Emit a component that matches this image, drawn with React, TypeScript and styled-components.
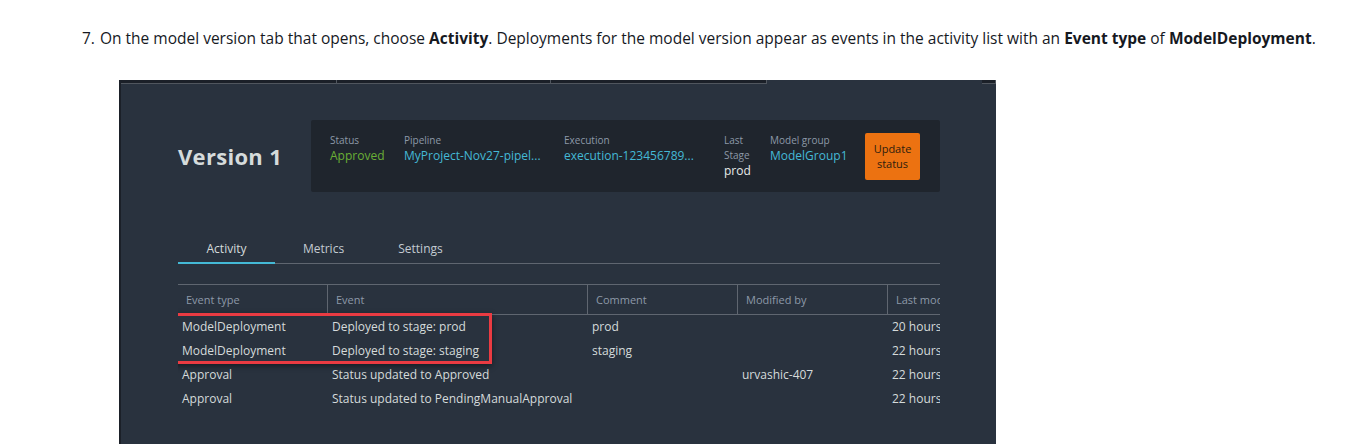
import { createGlobalStyle } from "styled-components";
import styled from "styled-components";

const GlobalStyle = createGlobalStyle`
    html, body {
        margin: 0;
        padding: 0;
        background: #ffffff;
        overflow: hidden;
    }
    body {
        font-family: "Open Sans", "Liberation Sans", sans-serif;
        color: #16191f;
    }
`;

const Page = styled.div`
    padding: 27px 0 0 82px;
    height: 444px;
    box-sizing: border-box;
`;

const Step = styled.div`
    display: flex;
    font-size: 15.5px;
    line-height: 22px;
    white-space: nowrap;

    b {
        font-weight: 700;
    }
`;

const StepNumber = styled.span`
    width: 18px;
    flex: none;
`;

const Shot = styled.div`
    margin: 31px 0 0 37px;
    width: 877px;
    height: 400px;
    background: #29323e;
    border-left: 2px solid #1b2028;
    box-sizing: border-box;
`;

const WindowTabs = styled.div`
    display: flex;
    height: 4px;
`;

interface WindowTabProps {
    $width: number;
    $active?: boolean;
}

const WindowTab = styled.div<WindowTabProps>`
    width: ${(p) => p.$width}px;
    flex: none;
    box-sizing: border-box;
    background: ${(p) => (p.$active ? "transparent" : "#1b2028")};
    border-bottom: ${(p) => (p.$active ? "none" : "1px solid #50565e")};
    border-right: ${(p) => (p.$active ? "none" : "1px solid #50565e")};
`;

const Content = styled.div`
    padding: 36px 56px 0 57px;
`;

const HeaderRow = styled.div`
    display: flex;
    align-items: center;
`;

const Title = styled.h1`
    margin: 0;
    width: 133px;
    font-size: 22px;
    font-weight: 700;
    color: #d5dbdb;
    letter-spacing: 0.3px;
`;

const InfoBox = styled.div`
    display: flex;
    align-items: center;
    width: 629px;
    height: 72px;
    box-sizing: border-box;
    padding: 0 20px 0 19px;
    background: #1f252d;
    border-radius: 2px;
`;

interface FieldProps {
    $width: number;
}

const Field = styled.div<FieldProps>`
    width: ${(p) => p.$width}px;
    flex: none;
    align-self: flex-start;
    padding-top: 13px;
    display: flex;
    flex-direction: column;
`;

const Label = styled.span`
    font-size: 10px;
    line-height: 15px;
    color: #8d99a8;
`;

type Tone = "green" | "blue" | "white";

const toneColor: Record<Tone, string> = {
    green: "#6aaf35",
    blue: "#44b9d6",
    white: "#e6eaea",
};

const Value = styled.span<{ $tone: Tone }>`
    font-size: 12px;
    line-height: 16px;
    color: ${(p) => toneColor[p.$tone]};
    white-space: nowrap;
`;

const UpdateButton = styled.button`
    margin-left: auto;
    width: 55px;
    height: 47px;
    padding: 0;
    border: none;
    border-radius: 2px;
    background: #ec7211;
    color: #2e1d0e;
    font-family: inherit;
    font-size: 11px;
    line-height: 15px;
`;

const Tabs = styled.div`
    display: flex;
    margin-top: 41px;
    border-bottom: 1px solid #5f6670;
`;

const Tab = styled.div<{ $active?: boolean }>`
    width: 97px;
    height: 31px;
    box-sizing: border-box;
    text-align: center;
    font-size: 12px;
    line-height: 31px;
    color: ${(p) => (p.$active ? "#d5dbdb" : "#c4cbd2")};
    border-bottom: 2px solid ${(p) => (p.$active ? "#44b9d6" : "transparent")};
    margin-bottom: -1px;
`;

const TableWrap = styled.div`
    position: relative;
    margin-top: 20px;
    overflow: hidden;
`;

const columns = "149px 260px 150px 150px 150px";

const HeadRow = styled.div`
    display: grid;
    grid-template-columns: ${columns};
    height: 29px;
    border-top: 1px solid #5f6670;
    border-bottom: 1px solid #5f6670;
`;

const HeadCell = styled.div`
    padding-left: 8px;
    font-size: 11px;
    line-height: 29px;
    color: #8d99a8;
    white-space: nowrap;

    & + & {
        border-left: 1px solid #5f6670;
    }
`;

const Row = styled.div`
    display: grid;
    grid-template-columns: ${columns};
    height: 24px;
`;

const Cell = styled.div`
    padding-left: 4px;
    font-size: 12px;
    line-height: 24px;
    color: #d5dbdb;
    white-space: nowrap;

    & + & {
        padding-left: 5px;
    }
`;

const Highlight = styled.div`
    position: absolute;
    left: -8px;
    top: 29px;
    width: 322px;
    height: 51px;
    box-sizing: border-box;
    border: 3px solid #ea3b42;
    box-shadow: 0 2px 6px rgba(0, 0, 0, 0.45);
    pointer-events: none;
`;

const rows = [
    ["ModelDeployment", "Deployed to stage: prod", "prod", "", "20 hours"],
    ["ModelDeployment", "Deployed to stage: staging", "staging", "", "22 hours"],
    ["Approval", "Status updated to Approved", "", "urvashic-407", "22 hours"],
    ["Approval", "Status updated to PendingManualApproval", "", "", "22 hours"],
];

export default function App() {
    return (
        <>
            <GlobalStyle />
            <Page>
                <Step>
                    <StepNumber>7.</StepNumber>
                    <span>
                        On the model version tab that opens, choose <b>Activity</b>. Deployments for the
                        model version appear as events in the activity list with an <b>Event type</b> of{" "}
                        <b>ModelDeployment</b>.
                    </span>
                </Step>
                <Shot>
                    <WindowTabs>
                        <WindowTab $width={216} />
                        <WindowTab $width={214} />
                        <WindowTab $width={216} />
                        <WindowTab $width={215} $active />
                        <WindowTab $width={14} />
                    </WindowTabs>
                    <Content>
                        <HeaderRow>
                            <Title>Version 1</Title>
                            <InfoBox>
                                <Field $width={74}>
                                    <Label>Status</Label>
                                    <Value $tone="green">Approved</Value>
                                </Field>
                                <Field $width={160}>
                                    <Label>Pipeline</Label>
                                    <Value $tone="blue">MyProject-Nov27-pipel...</Value>
                                </Field>
                                <Field $width={160}>
                                    <Label>Execution</Label>
                                    <Value $tone="blue">execution-123456789...</Value>
                                </Field>
                                <Field $width={46}>
                                    <Label>Last</Label>
                                    <Label>Stage</Label>
                                    <Value $tone="white">prod</Value>
                                </Field>
                                <Field $width={95}>
                                    <Label>Model group</Label>
                                    <Value $tone="blue">ModelGroup1</Value>
                                </Field>
                                <UpdateButton>
                                    Update
                                    <br />
                                    status
                                </UpdateButton>
                            </InfoBox>
                        </HeaderRow>
                        <Tabs>
                            <Tab $active>Activity</Tab>
                            <Tab>Metrics</Tab>
                            <Tab>Settings</Tab>
                        </Tabs>
                        <TableWrap>
                            <HeadRow>
                                <HeadCell>Event type</HeadCell>
                                <HeadCell>Event</HeadCell>
                                <HeadCell>Comment</HeadCell>
                                <HeadCell>Modified by</HeadCell>
                                <HeadCell>Last modified</HeadCell>
                            </HeadRow>
                            {rows.map((r, i) => (
                                <Row key={i}>
                                    {r.map((c, j) => (
                                        <Cell key={j}>{c}</Cell>
                                    ))}
                                </Row>
                            ))}
                            <Highlight />
                        </TableWrap>
                    </Content>
                </Shot>
            </Page>
        </>
    );
}
